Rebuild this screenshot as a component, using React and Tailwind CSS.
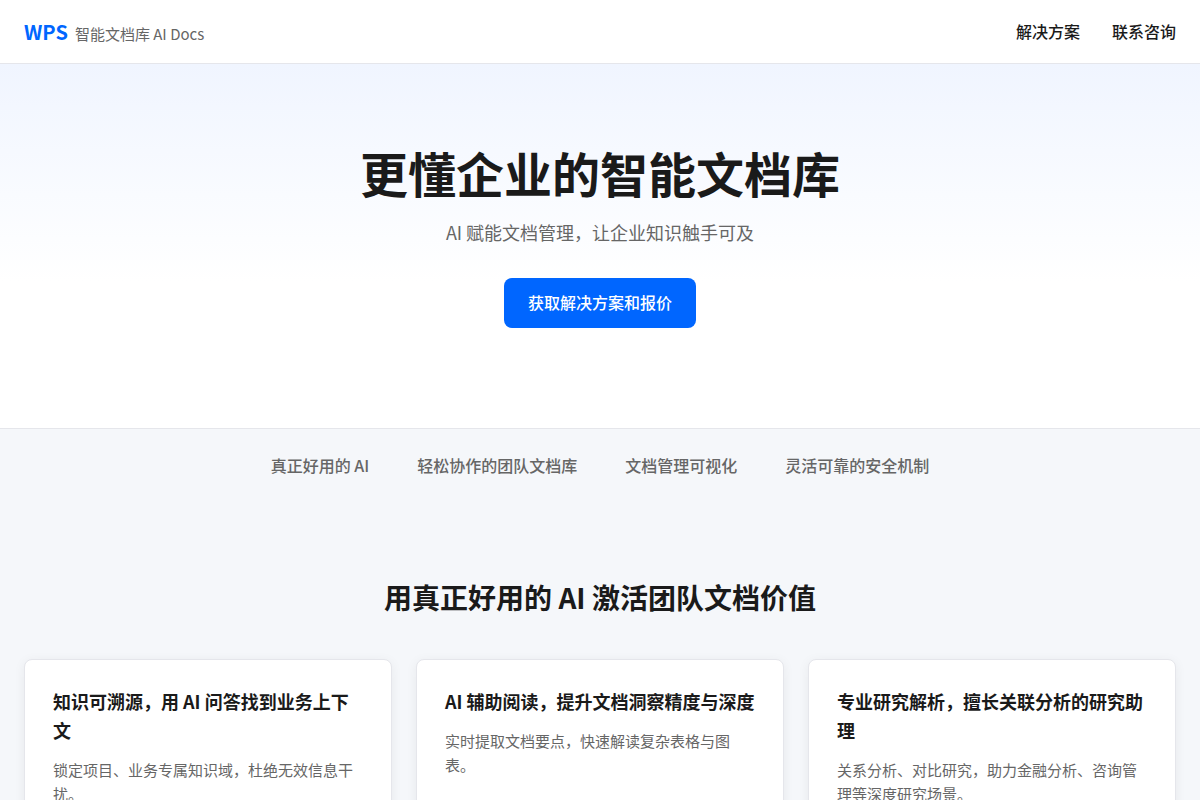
const navLinks = [
  { label: '解决方案', href: '#solutions' },
  { label: '联系咨询', href: '#contact' }
];

const tabs = ['真正好用的 AI', '轻松协作的团队文档库', '文档管理可视化', '灵活可靠的安全机制'];

const features = [
  {
    title: '知识可溯源，用 AI 问答找到业务上下文',
    text: '锁定项目、业务专属知识域，杜绝无效信息干扰。'
  },
  {
    title: 'AI 辅助阅读，提升文档洞察精度与深度',
    text: '实时提取文档要点，快速解读复杂表格与图表。'
  },
  {
    title: '专业研究解析，擅长关联分析的研究助理',
    text: '关系分析、对比研究，助力金融分析、咨询管理等深度研究场景。'
  }
];

function Header() {
  return (
    <header className="border-b border-[#e5e6eb] bg-white">
      <div className="mx-auto flex h-[63px] max-w-[1200px] items-center justify-between px-6">
        <a href="#home" className="flex items-baseline gap-[7px]">
          <span className="text-xl font-bold text-[#0066ff]">WPS</span>
          <span className="text-[15px] text-[#666666]">智能文档库 AI Docs</span>
        </a>
        <nav className="flex gap-8">
          {navLinks.map((link) => (
            <a key={link.href} href={link.href} className="leading-[25px] font-medium">
              {link.label}
            </a>
          ))}
        </nav>
      </div>
    </header>
  );
}

function Hero() {
  return (
    <section id="home" className="bg-linear-to-b from-[#f0f5ff] to-white to-60% px-6 pt-20 pb-[100px] text-center">
      <h1 className="mb-4 text-5xl leading-[57px] font-bold">更懂企业的智能文档库</h1>
      <p className="mb-[31px] text-lg leading-[30px] text-[#666666]">AI 赋能文档管理，让企业知识触手可及</p>
      <a href="#contact" className="inline-block rounded-lg bg-[#0066ff] px-6 pt-3 pb-[13px] leading-[25px] font-medium text-white">
        获取解决方案和报价
      </a>
    </section>
  );
}

function FeatureTabs() {
  return (
    <nav className="border-t border-[#e5e6eb] bg-[#f5f7fa] px-6 py-6">
      <ul className="flex flex-wrap justify-center gap-x-12 gap-y-4">
        {tabs.map((tab) => (
          <li key={tab} className="leading-[25px] font-medium text-[#666666]">
            {tab}
          </li>
        ))}
      </ul>
    </nav>
  );
}

function Features() {
  return (
    <section id="solutions" className="bg-[#f5f7fa] py-18">
      <div className="mx-auto max-w-[1200px] px-6">
        <h2 className="mb-[38px] text-center text-[28px] leading-[47px] font-bold">用真正好用的 AI 激活团队文档价值</h2>
        <div className="grid gap-6 md:grid-cols-3">
          {features.map((feature) => (
            <article key={feature.title} className="rounded-lg border border-[#e5e6eb] bg-white px-7 pt-[27px] pb-7 shadow-[0_2px_12px_rgba(0,0,0,0.06)]">
              <h3 className="mb-[13px] text-lg leading-[29px] font-bold">{feature.title}</h3>
              <p className="text-[15px] leading-6 text-[#666666]">{feature.text}</p>
            </article>
          ))}
        </div>
      </div>
    </section>
  );
}

export default function App() {
  return (
    <div className="min-h-screen bg-white font-['Noto_Sans_CJK_SC',sans-serif] text-[#1a1a1a]" lang="zh-CN">
      <Header />
      <main>
        <Hero />
        <FeatureTabs />
        <Features />
      </main>
    </div>
  );
}
